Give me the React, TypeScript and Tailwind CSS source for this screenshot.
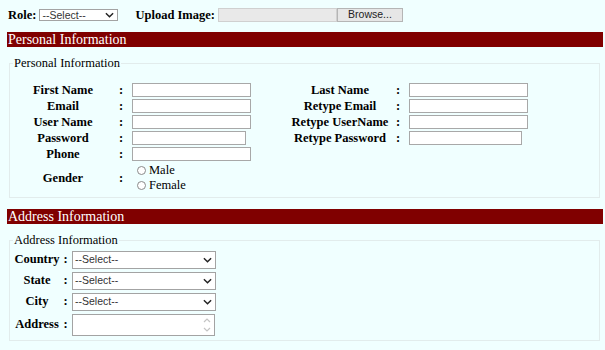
import React from 'react';

const serif = "font-['Liberation_Serif','Times_New_Roman',serif]";
const sans = "font-['Liberation_Sans',Arial,sans-serif]";

function Chevron({ className = '' }: { className?: string }) {
  return (
    <svg viewBox="0 0 10 6" className={className} fill="none" stroke="#222" strokeWidth="1.6">
      <polyline points="1,1 5,5 9,1" />
    </svg>
  );
}

function FakeSelect({ w, h, text = '--Select--' }: { w: string; h: string; text?: string }) {
  return (
    <div className={`${w} ${h} bg-white border border-[#a3a3a3] flex items-center justify-between pl-[2px] pr-[3px] ${sans} text-[10.5px] text-[#333]`}>
      <span className="leading-none">{text}</span>
      <Chevron className="w-[9px] h-[6px]" />
    </div>
  );
}

function TextBox({ w = 'w-[119px]' }: { w?: string }) {
  return <input readOnly className={`${w} h-[14px] bg-white border border-[#a8a8a8] outline-none`} />;
}

function Radio({ label }: { label: string }) {
  return (
    <div className="flex items-center h-[15px]">
      <span className="w-[9px] h-[9px] rounded-full border border-[#8a8a8a] bg-white mr-[3px]" />
      <span className="text-[12.5px] leading-none">{label}</span>
    </div>
  );
}

function Bar({ title }: { title: string }) {
  return (
    <div className={`ml-[7px] w-[596px] h-[15px] bg-[#800000] text-white text-[14px] leading-[15px] pl-[1px] ${serif}`}>
      {title}
    </div>
  );
}

const personalRows: [string, string, string | null, string | null][] = [
  ['First Name', 'w-[119px]', 'Last Name', 'w-[119px]'],
  ['Email', 'w-[119px]', 'Retype Email', 'w-[119px]'],
  ['User Name', 'w-[119px]', 'Retype UserName', 'w-[119px]'],
  ['Password', 'w-[114px]', 'Retype Password', 'w-[113px]'],
  ['Phone', 'w-[119px]', null, null],
];

export default function App() {
  return (
    <div className={`w-[605px] h-[350px] overflow-hidden bg-[#f0ffff] text-black ${serif}`}>
      {/* top row */}
      <div className="flex items-center h-[14px] mt-[8px] pl-[8px]">
        <span className="font-bold text-[12.5px] leading-none">Role:</span>
        <div className="ml-[3px]">
          <FakeSelect w="w-[79px]" h="h-[12px]" />
        </div>
        <span className="ml-[17px] font-bold text-[12.5px] leading-none">Upload Image:</span>
        <div className="ml-[3px] flex h-[14px]">
          <div className="w-[119px] h-full bg-[#e9e9e9] border border-[#d0d0d0]" />
          <div className={`w-[66px] h-full bg-[#e6e6e6] border border-[#b5b5b5] flex items-center justify-center ${sans} text-[10.5px] text-[#222]`}>
            Browse...
          </div>
        </div>
      </div>

      <div className="mt-[10px]">
        <Bar title="Personal Information" />
      </div>

      <fieldset className="mt-[9px] ml-[9px] mr-[5px] border border-[#e2ecec] px-[3px] pb-[3px]">
        <legend className="px-[1px] text-[12.5px] leading-[14px]">Personal Information</legend>
        <div className="pt-[12px]">
          {personalRows.map(([l1, w1, l2, w2]) => (
            <div key={l1} className="grid grid-cols-[100px_16px_159px_104px_12px_1fr] items-center h-[16px]">
              <span className="text-center font-bold text-[12.5px] leading-none">{l1}</span>
              <span className="text-center font-bold text-[12.5px] leading-none">:</span>
              <div className="pl-[3px] flex">
                <TextBox w={w1} />
              </div>
              {l2 ? (
                <>
                  <span className="text-center font-bold text-[12.5px] leading-none whitespace-nowrap">{l2}</span>
                  <span className="text-center font-bold text-[12.5px] leading-none">:</span>
                  <div className="pl-[5px] flex">
                    <TextBox w={w2 ?? undefined} />
                  </div>
                </>
              ) : (
                <>
                  <span />
                  <span />
                  <span />
                </>
              )}
            </div>
          ))}
          <div className="grid grid-cols-[100px_16px_159px_1fr] items-center h-[32px]">
            <span className="text-center font-bold text-[12.5px] leading-none">Gender</span>
            <span className="text-center font-bold text-[12.5px] leading-none">:</span>
            <div className="pl-[8px] flex flex-col">
              <Radio label="Male" />
              <Radio label="Female" />
            </div>
          </div>
        </div>
      </fieldset>

      <div className="mt-[11px]">
        <Bar title="Address Information" />
      </div>

      <fieldset className="mt-[9px] ml-[9px] mr-[5px] border border-[#e2ecec] px-[3px] pb-[3px]">
        <legend className="px-[1px] text-[12.5px] leading-[14px]">Address Information</legend>
        <div className="pt-[2px]">
          {['Country', 'State', 'City'].map((l) => (
            <div key={l} className="grid grid-cols-[48px_9px_1fr] items-center h-[21px]">
              <span className="text-center font-bold text-[12.5px] leading-none">{l}</span>
              <span className="text-center font-bold text-[12.5px] leading-none">:</span>
              <div className="pl-[2px]">
                <FakeSelect w="w-[144px]" h="h-[18px]" />
              </div>
            </div>
          ))}
          <div className="grid grid-cols-[48px_9px_1fr] items-center h-[25px]">
            <span className="text-center font-bold text-[12.5px] leading-none">Address</span>
            <span className="text-center font-bold text-[12.5px] leading-none">:</span>
            <div className="pl-[2px]">
              <div className="w-[143px] h-[22px] bg-white border border-[#a3a3a3] flex justify-end pr-[2px]">
                <svg viewBox="0 0 10 20" className="w-[10px] h-[20px]" fill="none" stroke="#c4c4c4" strokeWidth="1.2">
                  <polyline points="2,7 5,4 8,7" />
                  <polyline points="2,13 5,16 8,13" />
                </svg>
              </div>
            </div>
          </div>
        </div>
      </fieldset>
    </div>
  );
}
